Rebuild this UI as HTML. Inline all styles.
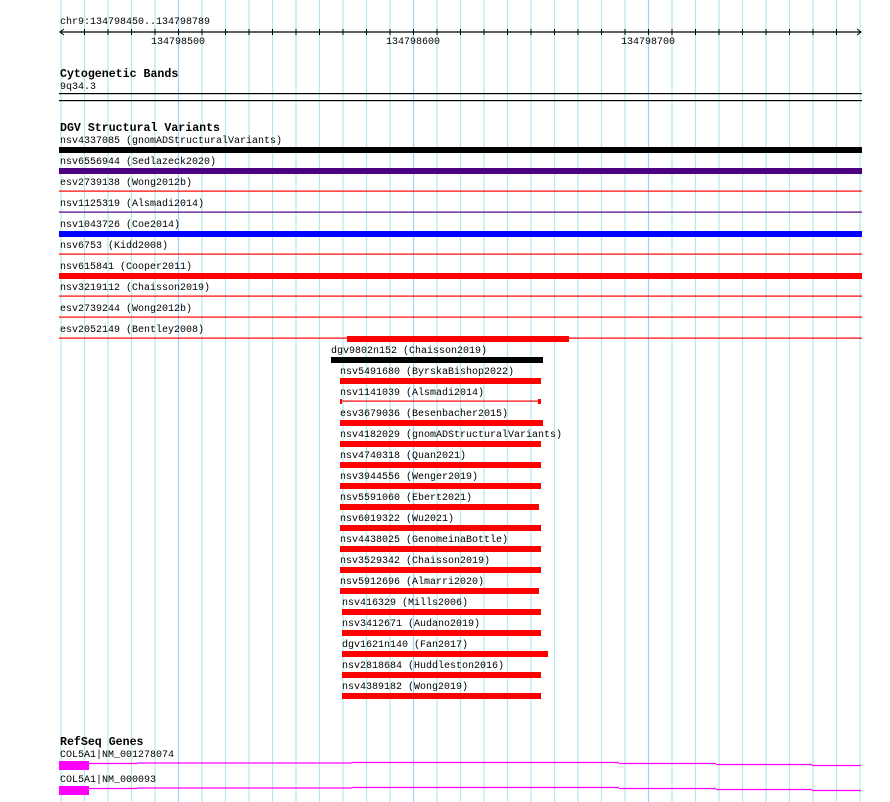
<!DOCTYPE html>
<html><head><meta charset="utf-8"><style>
html,body{margin:0;padding:0;background:#fff;}
svg{display:block;}
text{font-family:"Liberation Mono","DejaVu Sans Mono",monospace;font-size:10px;fill:#000;transform:translateY(-1px);}
.t{font-weight:bold;font-size:11.6px;}
</style></head><body>
<svg width="890" height="802" xmlns="http://www.w3.org/2000/svg">
<g id="grid" stroke="#aeeaee" stroke-width="1.2">
<line x1="61" y1="0" x2="61" y2="802"/><line x1="84.5" y1="0" x2="84.5" y2="802"/><line x1="108" y1="0" x2="108" y2="802"/><line x1="131.5" y1="0" x2="131.5" y2="802"/><line x1="155" y1="0" x2="155" y2="802"/><line x1="178.5" y1="0" x2="178.5" y2="802" stroke="#9cd6ee"/><line x1="202" y1="0" x2="202" y2="802"/><line x1="225.5" y1="0" x2="225.5" y2="802"/><line x1="249" y1="0" x2="249" y2="802"/><line x1="272.5" y1="0" x2="272.5" y2="802"/><line x1="296" y1="0" x2="296" y2="802"/><line x1="319.5" y1="0" x2="319.5" y2="802"/><line x1="343" y1="0" x2="343" y2="802"/><line x1="366.5" y1="0" x2="366.5" y2="802"/><line x1="390" y1="0" x2="390" y2="802"/><line x1="413.5" y1="0" x2="413.5" y2="802" stroke="#9cd6ee"/><line x1="437" y1="0" x2="437" y2="802"/><line x1="460.5" y1="0" x2="460.5" y2="802"/><line x1="484" y1="0" x2="484" y2="802"/><line x1="507.5" y1="0" x2="507.5" y2="802"/><line x1="531" y1="0" x2="531" y2="802"/><line x1="554.5" y1="0" x2="554.5" y2="802"/><line x1="578" y1="0" x2="578" y2="802"/><line x1="601.5" y1="0" x2="601.5" y2="802"/><line x1="625" y1="0" x2="625" y2="802"/><line x1="648.5" y1="0" x2="648.5" y2="802" stroke="#9cd6ee"/><line x1="672" y1="0" x2="672" y2="802"/><line x1="695.5" y1="0" x2="695.5" y2="802"/><line x1="719" y1="0" x2="719" y2="802"/><line x1="742.5" y1="0" x2="742.5" y2="802"/><line x1="766" y1="0" x2="766" y2="802"/><line x1="789.5" y1="0" x2="789.5" y2="802"/><line x1="813" y1="0" x2="813" y2="802"/><line x1="836.5" y1="0" x2="836.5" y2="802"/><line x1="860" y1="0" x2="860" y2="802"/>
</g>
<text x="60" y="25">chr9:134798450..134798789</text>
<line x1="60" y1="32" x2="861" y2="32" stroke="#000" stroke-width="1.2"/>
<path d="M64 29 L60 32 L64 35 M857 29 L861 32 L857 35" stroke="#000" fill="none" stroke-width="1"/>
<g stroke="#000" stroke-width="1">
<path d="M84.5 29V35M108 29V35M131.5 29V35M155 29V35M178.5 29V35M202 29V35M225.5 29V35M249 29V35M272.5 29V35M296 29V35M319.5 29V35M343 29V35M366.5 29V35M390 29V35M413.5 29V35M437 29V35M460.5 29V35M484 29V35M507.5 29V35M531 29V35M554.5 29V35M578 29V35M601.5 29V35M625 29V35M648.5 29V35M672 29V35M695.5 29V35M719 29V35M742.5 29V35M766 29V35M789.5 29V35M813 29V35M836.5 29V35"/>
</g>
<text x="151" y="45">134798500</text>
<text x="386" y="45">134798600</text>
<text x="621" y="45">134798700</text>
<text class="t" x="60" y="78">Cytogenetic Bands</text>
<text x="60" y="90">9q34.3</text>
<rect x="59" y="93" width="803" height="1.2" fill="#000"/>
<rect x="59" y="100" width="803" height="1.2" fill="#000"/>
<text class="t" x="60" y="132">DGV Structural Variants</text>
<text x="60" y="144">nsv4337085 (gnomADStructuralVariants)</text>
<rect x="59" y="147" width="803" height="6" fill="#000"/>
<text x="60" y="165">nsv6556944 (Sedlazeck2020)</text>
<rect x="59" y="168" width="803" height="6" fill="#4b0082"/>
<text x="60" y="186">esv2739138 (Wong2012b)</text>
<rect x="59" y="190.5" width="803" height="1.2" fill="#f00"/>
<text x="60" y="207">nsv1125319 (Alsmadi2014)</text>
<rect x="59" y="211.5" width="803" height="1.2" fill="#4b0082"/>
<text x="60" y="228">nsv1043726 (Coe2014)</text>
<rect x="59" y="231" width="803" height="6" fill="#00f"/>
<text x="60" y="249">nsv6753 (Kidd2008)</text>
<rect x="59" y="253.5" width="803" height="1.2" fill="#f00"/>
<text x="60" y="270">nsv615841 (Cooper2011)</text>
<rect x="59" y="273" width="803" height="6" fill="#f00"/>
<text x="60" y="291">nsv3219112 (Chaisson2019)</text>
<rect x="59" y="295.5" width="803" height="1.2" fill="#f00"/>
<text x="60" y="312">esv2739244 (Wong2012b)</text>
<rect x="59" y="316.5" width="803" height="1.2" fill="#f00"/>
<text x="60" y="333">esv2052149 (Bentley2008)</text>
<rect x="59" y="337.5" width="803" height="1.2" fill="#f00"/>
<rect x="347" y="336" width="222" height="6" fill="#f00"/>
<text x="331" y="354">dgv9802n152 (Chaisson2019)</text>
<rect x="331" y="357" width="212" height="6" fill="#000"/>
<text x="340" y="375">nsv5491680 (ByrskaBishop2022)</text>
<rect x="340" y="378" width="201" height="6" fill="#f00"/>
<text x="340" y="396">nsv1141039 (Alsmadi2014)</text>
<rect x="340" y="400.5" width="200" height="1.2" fill="#f00"/>
<rect x="340" y="399" width="2" height="5" fill="#f00"/><rect x="538" y="399" width="3" height="5" fill="#f00"/>
<text x="340" y="417">esv3679036 (Besenbacher2015)</text>
<rect x="340" y="420" width="203" height="6" fill="#f00"/>
<text x="340" y="438">nsv4182029 (gnomADStructuralVariants)</text>
<rect x="340" y="441" width="201" height="6" fill="#f00"/>
<text x="340" y="459">nsv4740318 (Quan2021)</text>
<rect x="340" y="462" width="201" height="6" fill="#f00"/>
<text x="340" y="480">nsv3944556 (Wenger2019)</text>
<rect x="340" y="483" width="201" height="6" fill="#f00"/>
<text x="340" y="501">nsv5591060 (Ebert2021)</text>
<rect x="340" y="504" width="199" height="6" fill="#f00"/>
<text x="340" y="522">nsv6019322 (Wu2021)</text>
<rect x="340" y="525" width="201" height="6" fill="#f00"/>
<text x="340" y="543">nsv4438025 (GenomeinaBottle)</text>
<rect x="340" y="546" width="201" height="6" fill="#f00"/>
<text x="340" y="564">nsv3529342 (Chaisson2019)</text>
<rect x="340" y="567" width="201" height="6" fill="#f00"/>
<text x="340" y="585">nsv5912696 (Almarri2020)</text>
<rect x="340" y="588" width="199" height="6" fill="#f00"/>
<text x="342" y="606">nsv416329 (Mills2006)</text>
<rect x="342" y="609" width="199" height="6" fill="#f00"/>
<text x="342" y="627">nsv3412671 (Audano2019)</text>
<rect x="342" y="630" width="199" height="6" fill="#f00"/>
<text x="342" y="648">dgv1621n140 (Fan2017)</text>
<rect x="342" y="651" width="206" height="6" fill="#f00"/>
<text x="342" y="669">nsv2818684 (Huddleston2016)</text>
<rect x="342" y="672" width="199" height="6" fill="#f00"/>
<text x="342" y="690">nsv4389182 (Wong2019)</text>
<rect x="342" y="693" width="199" height="6" fill="#f00"/>
<text class="t" x="60" y="746">RefSeq Genes</text>
<text x="60" y="758">COL5A1|NM_001278074</text>
<rect x="59" y="761" width="30" height="9" fill="#f0f"/>
<path d="M89 763.5H137M137 763H233M233 763H352M352 762.5H619M619 763.5H716M716 764.5H812M812 765.5H861" stroke="#f0f" stroke-width="1.2" fill="none"/>
<text x="60" y="783">COL5A1|NM_000093</text>
<rect x="59" y="786" width="30" height="9" fill="#f0f"/>
<path d="M89 788.5H137M137 788H233M233 788H352M352 787.5H619M619 788.5H716M716 789.5H812M812 790.5H861" stroke="#f0f" stroke-width="1.2" fill="none"/>
</svg>
</body></html>
